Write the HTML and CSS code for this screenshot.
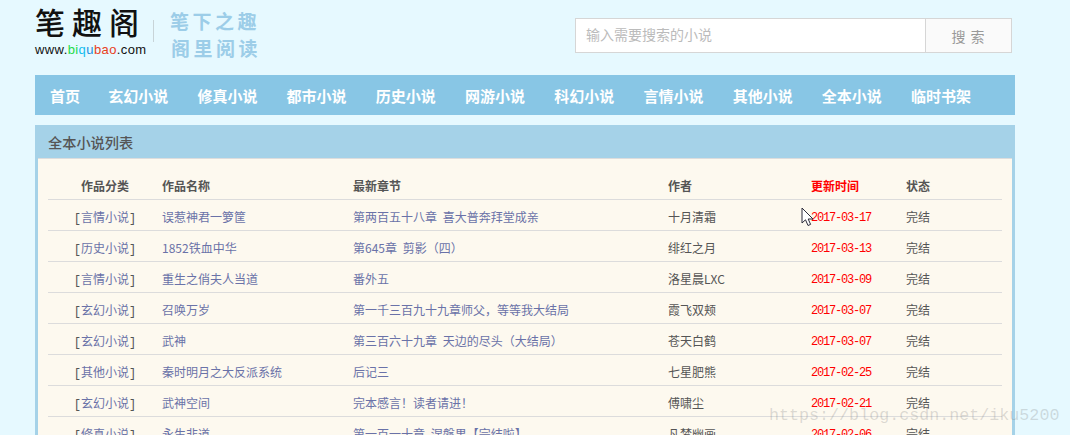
FILE: index.html
```html
<!DOCTYPE html>
<html lang="zh">
<head>
<meta charset="utf-8">
<title>笔趣阁</title>
<link rel="stylesheet" href="styles.css">
</head>
<body>
<div class="page">
  <header class="top">
    <div class="logo">
      <div class="logo-name"><span>笔</span><span>趣</span><span>阁</span></div>
      <div class="logo-url">www.<b class="g">bi</b><b class="c">q</b><b class="b">u</b><b class="r">bao</b>.com</div>
    </div>
    <div class="slogan"><div>笔下之趣</div><div class="s2">阁里阅读</div></div>
    <div class="search">
      <div class="search-input">输入需要搜索的小说</div>
      <div class="search-btn">搜 索</div>
    </div>
  </header>
  <nav class="nav">
    <a>首页</a><a>玄幻小说</a><a>修真小说</a><a>都市小说</a><a>历史小说</a><a>网游小说</a><a>科幻小说</a><a>言情小说</a><a>其他小说</a><a>全本小说</a><a>临时书架</a>
  </nav>
  <section class="panel">
    <h2 class="panel-title">全本小说列表</h2>
    <div class="panel-body">
      <div class="row head">
        <div class="c1">作品分类</div><div class="c2">作品名称</div><div class="c3">最新章节</div><div class="c4">作者</div><div class="c5 red">更新时间</div><div class="c6">状态</div>
      </div>
      <div class="row"><div class="c1 cat">[<a class="link">言情小说</a>]</div><div class="c2 link">误惹神君一箩筐</div><div class="c3 link">第两百五十八章 喜大普奔拜堂成亲</div><div class="c4">十月清霜</div><div class="c5 red date">2017-03-17</div><div class="c6">完结</div></div>
      <div class="row"><div class="c1 cat">[<a class="link">历史小说</a>]</div><div class="c2 link">1852铁血中华</div><div class="c3 link">第645章 剪影（四）</div><div class="c4">绯红之月</div><div class="c5 red date">2017-03-13</div><div class="c6">完结</div></div>
      <div class="row"><div class="c1 cat">[<a class="link">言情小说</a>]</div><div class="c2 link">重生之俏夫人当道</div><div class="c3 link">番外五</div><div class="c4">洛星晨LXC</div><div class="c5 red date">2017-03-09</div><div class="c6">完结</div></div>
      <div class="row"><div class="c1 cat">[<a class="link">玄幻小说</a>]</div><div class="c2 link">召唤万岁</div><div class="c3 link">第一千三百九十九章师父，等等我大结局</div><div class="c4">霞飞双颊</div><div class="c5 red date">2017-03-07</div><div class="c6">完结</div></div>
      <div class="row"><div class="c1 cat">[<a class="link">玄幻小说</a>]</div><div class="c2 link">武神</div><div class="c3 link">第三百六十九章 天边的尽头（大结局）</div><div class="c4">苍天白鹤</div><div class="c5 red date">2017-03-07</div><div class="c6">完结</div></div>
      <div class="row"><div class="c1 cat">[<a class="link">其他小说</a>]</div><div class="c2 link">秦时明月之大反派系统</div><div class="c3 link">后记三</div><div class="c4">七星肥熊</div><div class="c5 red date">2017-02-25</div><div class="c6">完结</div></div>
      <div class="row"><div class="c1 cat">[<a class="link">玄幻小说</a>]</div><div class="c2 link">武神空间</div><div class="c3 link">完本感言！读者请进！</div><div class="c4">傅啸尘</div><div class="c5 red date">2017-02-21</div><div class="c6">完结</div></div>
      <div class="row"><div class="c1 cat">[<a class="link">修真小说</a>]</div><div class="c2 link">永生非道</div><div class="c3 link">第一百一十章 涅槃果【完结啦】</div><div class="c4">凡梦幽画</div><div class="c5 red date">2017-02-06</div><div class="c6">完结</div></div>
    </div>
  </section>
</div>
<svg class="cursor" width="13" height="20" viewBox="0 0 13 20"><path d="M1 1V16L4.5 12.8 7 18.5 9.6 17.4 7.2 12H12Z" fill="#fff" stroke="#2b2b3a" stroke-width="1"/></svg>
<div class="watermark">https://blog.csdn.net/iku5200</div>
</body>
</html>
```
FILE: styles.css
```css
html, body { margin: 0; padding: 0; height: 435px; overflow: hidden; }
body { background: #e6f9ff; font-family: "Noto Sans CJK SC", "Liberation Sans", sans-serif; font-size: 12px; color: #555; position: relative; }
.page { width: 980px; margin-left: 35px; }
.top { height: 75px; display: flex; align-items: flex-start; }
.logo { width: 110px; padding-top: 5px; }
.logo-name { display: flex; justify-content: space-between; font-size: 30px; line-height: 33px; color: #111; font-weight: 500; width: 104px; }
.logo-url { font-family: "Liberation Sans", sans-serif; font-size: 13px; line-height: 14px; margin-top: 5px; color: #111; white-space: nowrap; letter-spacing: .4px; }
.logo-url b { font-weight: 400; }
.g { color: #1ddb4a; } .c { color: #12bdf0; } .b { color: #1a8fe0; } .r { color: #e8401c; }
.slogan { margin: 8px 0 0 25px; font-size: 19px; line-height: 26px; font-weight: 700; color: #9ccde8; letter-spacing: 3.5px; position: relative; white-space: nowrap; }
.slogan::before { content: ""; position: absolute; left: -17px; top: 12px; width: 1px; height: 22px; background: #c8d4d8; }
.slogan .s2 { margin-top: 1px; margin-left: 1px; }
.search { margin: 18px 3px 0 auto; width: 437px; height: 35px; display: flex; box-sizing: border-box; border: 1px solid #d6d6d6; }
.search-input { flex: 1; background: #fff; font-size: 14px; line-height: 31px; padding-left: 10px; color: #bbb; }
.search-btn { width: 85px; border-left: 1px solid #d6d6d6; background: #fafafa; color: #999; font-size: 14px; line-height: 35px; text-align: center; letter-spacing: 1px; }
.nav { height: 40px; background: #88c6e5; display: flex; padding-left: 15px; gap: 29.2px; }
.nav a { color: #fff; font-weight: 700; font-size: 15px; line-height: 42px; white-space: nowrap; }
.nav a:first-child { margin-right: -1px; }
.panel { margin-top: 10px; background: #a5d2e8; padding: 0 3px; }
.panel-title { margin: 0; height: 33px; box-sizing: border-box; padding-left: 10px; font-size: 14.2px; line-height: 34px; font-weight: 500; color: #555; }
.panel-body { background: #fdf9ef; border-top: 1px solid #ddd; padding: 10px 10px 0; height: 300px; box-sizing: border-box; }
.row { display: flex; height: 31px; box-sizing: border-box; border-bottom: 1px solid #dcdcdc; font-size: 12px; line-height: 34px; white-space: nowrap; }
.row.head { font-weight: 700; }
.c1 { width: 114px; text-align: center; }
.cat { font-family: "Liberation Mono", "Noto Sans CJK SC", monospace; line-height: 38px; }
.c2 { width: 191px; }
.c3 { width: 315px; word-spacing: 3px; }
.c4 { width: 143px; }
.c5 { width: 95px; }
.c6 { flex: 1; }
.link { color: #6a72a8; }
.red { color: #f00; }
.date { font-family: "Liberation Mono", monospace; letter-spacing: -1.2px; line-height: 36px; }
.cursor { position: absolute; left: 801px; top: 207px; }
.watermark { position: absolute; left: 769px; top: 404px; font-family: "Liberation Mono", monospace; font-size: 16.7px; line-height: 24px; color: rgba(120,120,120,.25); white-space: nowrap; }
```
